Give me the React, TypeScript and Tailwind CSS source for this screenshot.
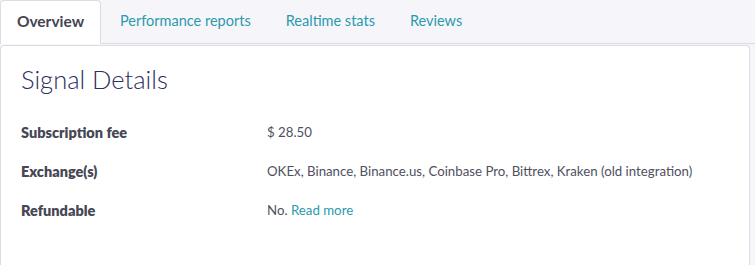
import { FC } from "react";

const tabs = ["Overview", "Performance reports", "Realtime stats", "Reviews"];

const Row: FC<{ label: string; children: React.ReactNode }> = ({ label, children }) => (
    <div className="flex items-center h-[39px]">
        <div className="w-[246px] font-['Lato',sans-serif] font-extrabold text-[14.5px] text-[#474755]">{label}</div>
        <div className="font-['Lato',sans-serif] text-[13.25px] text-[#4f5060]">{children}</div>
    </div>
);

export default function App() {
    return (
        <div className="w-[755px] h-[265px] bg-[#f6f6fa] flex flex-col font-['Lato',sans-serif]">
            <div className="flex h-[44px] border-b border-[#dcdce4]">
                {tabs.map((t, i) =>
                    i === 0 ? (
                        <div key={t} className="w-[101px] h-[44px] pb-[2px] bg-white border border-b-0 border-[#dcdce4] rounded-t-[4px] flex items-center justify-center text-[15.5px] font-bold text-[#45454f]">
                            {t}
                        </div>
                    ) : (
                        <div key={t} className="h-[44px] pb-[2px] pl-[19px] pr-[16px] flex items-center text-[14.5px] text-[#2a9aae]">
                            {t}
                        </div>
                    )
                )}
            </div>
            <div className="flex-1 mr-[5px] mt-[1px] bg-white border border-b-0 border-[#dcdce4] rounded-t-[4px] px-[20px] pt-[18px]">
                <h1 className="text-[25.5px] font-light text-[#2c2e5e] leading-[30px] mb-[19px]">Signal Details</h1>
                <Row label="Subscription fee">$ 28.50</Row>
                <Row label="Exchange(s)">OKEx, Binance, Binance.us, Coinbase Pro, Bittrex, Kraken (old integration)</Row>
                <Row label="Refundable">
                    No. <span className="text-[#2a9aae]">Read more</span>
                </Row>
            </div>
        </div>
    );
}
